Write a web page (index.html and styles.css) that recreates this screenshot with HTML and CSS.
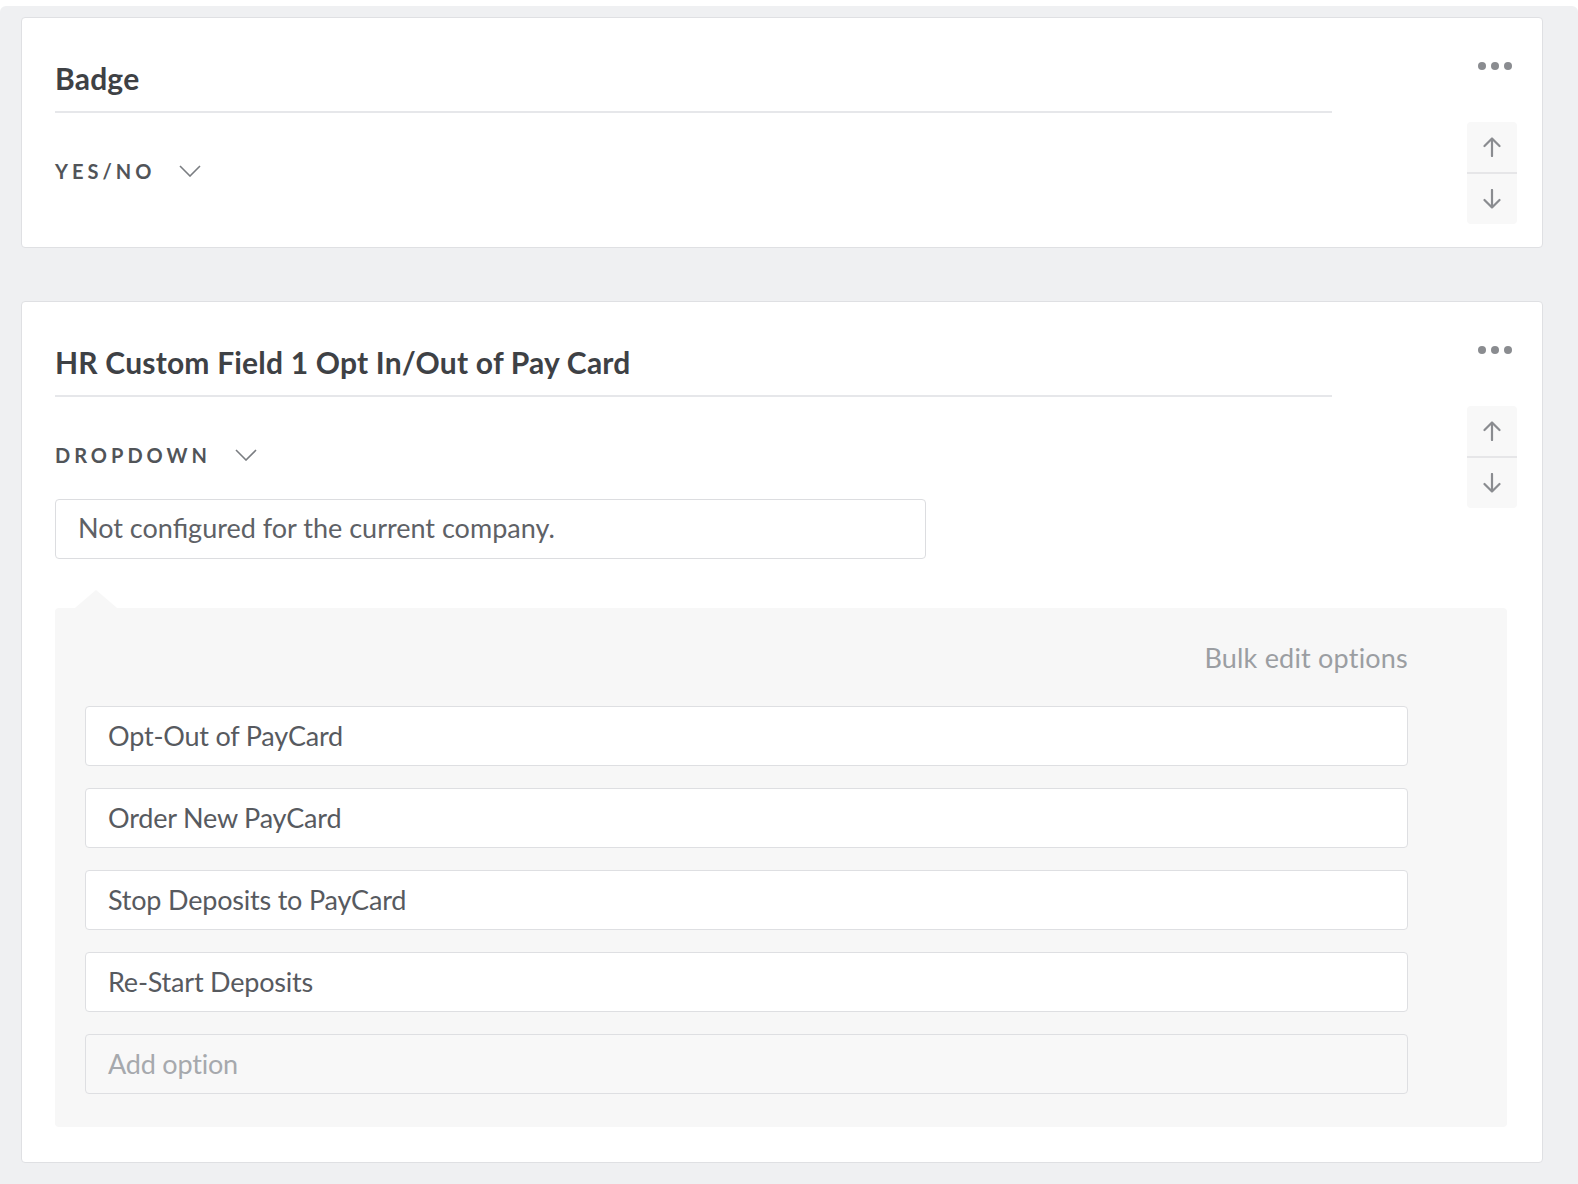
FILE: index.html
```html
<!DOCTYPE html>
<html lang="en">
<head>
<meta charset="utf-8">
<title>Custom fields</title>
<link rel="stylesheet" href="styles.css">
</head>
<body>
<div class="canvas">
  <section class="card">
    <div class="card-head">
      <div class="head-main">
        <h2 class="field-title">Badge</h2>
        <div class="type-select">
          <span class="type-label">YES/NO</span>
          <svg class="chev" width="22" height="12" viewBox="0 0 22 12"><path d="M1 1 L11 11 L21 1" fill="none" stroke="#7a7d81" stroke-width="1.6"/></svg>
        </div>
      </div>
      <div class="side">
        <div class="more"><span class="dot"></span><span class="dot"></span><span class="dot"></span></div>
        <div class="move">
          <button class="move-btn" type="button" aria-label="Move up"><svg width="20" height="20" viewBox="0 0 20 20"><path d="M10 19 V1.5 M2.5 9 L10 1.5 L17.5 9" fill="none" stroke="#8a8c90" stroke-width="2.2" stroke-linecap="round" stroke-linejoin="round"/></svg></button>
          <span class="move-sep"></span>
          <button class="move-btn" type="button" aria-label="Move down"><svg width="20" height="20" viewBox="0 0 20 20"><path d="M10 1 V18.5 M2.5 11 L10 18.5 L17.5 11" fill="none" stroke="#8a8c90" stroke-width="2.2" stroke-linecap="round" stroke-linejoin="round"/></svg></button>
        </div>
      </div>
    </div>
  </section>

  <section class="card">
    <div class="card-head">
      <div class="head-main">
        <h2 class="field-title">HR Custom Field 1 Opt In/Out of Pay Card</h2>
        <div class="type-select">
          <span class="type-label">DROPDOWN</span>
          <svg class="chev" width="22" height="12" viewBox="0 0 22 12"><path d="M1 1 L11 11 L21 1" fill="none" stroke="#7a7d81" stroke-width="1.6"/></svg>
        </div>
        <div class="notice">Not configured for the current company.</div>
      </div>
      <div class="side">
        <div class="more"><span class="dot"></span><span class="dot"></span><span class="dot"></span></div>
        <div class="move">
          <button class="move-btn" type="button" aria-label="Move up"><svg width="20" height="20" viewBox="0 0 20 20"><path d="M10 19 V1.5 M2.5 9 L10 1.5 L17.5 9" fill="none" stroke="#8a8c90" stroke-width="2.2" stroke-linecap="round" stroke-linejoin="round"/></svg></button>
          <span class="move-sep"></span>
          <button class="move-btn" type="button" aria-label="Move down"><svg width="20" height="20" viewBox="0 0 20 20"><path d="M10 1 V18.5 M2.5 11 L10 18.5 L17.5 11" fill="none" stroke="#8a8c90" stroke-width="2.2" stroke-linecap="round" stroke-linejoin="round"/></svg></button>
        </div>
      </div>
    </div>
    <div class="options-panel">
      <div class="bulk">Bulk edit options</div>
      <div class="option-list">
        <div class="option">Opt-Out of PayCard</div>
        <div class="option">Order New PayCard</div>
        <div class="option">Stop Deposits to PayCard</div>
        <div class="option">Re-Start Deposits</div>
        <div class="option option-add">Add option</div>
      </div>
    </div>
  </section>
</div>
</body>
</html>
```

FILE: styles.css
```css
* { box-sizing: border-box; }

html, body {
  margin: 0;
  padding: 0;
  background: #ffffff;
}

body {
  font-family: "Lato", "Liberation Sans", sans-serif;
  color: #55585c;
}

.canvas {
  margin-top: 6px;
  min-height: 1178px;
  background: #eff0f2;
  border-radius: 6px 6px 0 0;
  padding: 11px 35px 22px 21px;
  display: flex;
  flex-direction: column;
  gap: 53px;
}

.card {
  background: #ffffff;
  border: 1px solid #dfe0e3;
  border-radius: 4px;
  padding: 42px 25px 23px 33px;
}

.card:last-child {
  padding-bottom: 35px;
}

.card-head {
  display: flex;
  align-items: flex-start;
}

.head-main {
  flex: 1;
  margin-right: 135px;
}

.field-title {
  margin: 0;
  font-size: 30px;
  line-height: 36px;
  font-weight: 700;
  letter-spacing: 0.2px;
  color: #3e4145;
  padding-bottom: 15px;
  border-bottom: 2px solid #e6e7ea;
}

.type-select {
  margin-top: 46px;
  height: 24px;
  display: flex;
  align-items: center;
  gap: 24px;
}

.type-label {
  font-size: 20px;
  line-height: 24px;
  font-weight: 700;
  letter-spacing: 4px;
  color: #515458;
}

.chev {
  display: block;
}

.notice {
  margin-top: 32px;
  width: 871px;
  height: 60px;
  border: 1px solid #dcdde0;
  border-radius: 4px;
  padding: 0 22px 2px;
  display: flex;
  align-items: center;
  font-size: 27px;
  line-height: 34px;
  color: #5e6166;
}

.side {
  width: 50px;
  flex: none;
}

.more {
  margin: 2px 0 0 11px;
  display: flex;
  gap: 5px;
  height: 8px;
}

.dot {
  width: 8px;
  height: 8px;
  border-radius: 50%;
  background: #8a8c90;
}

.move {
  margin-top: 52px;
  width: 50px;
  background: #f8f8f8;
  border-radius: 4px;
  display: flex;
  flex-direction: column;
}

.move-btn {
  width: 50px;
  height: 50px;
  border: 0;
  padding: 0;
  margin: 0;
  background: transparent;
  display: flex;
  align-items: center;
  justify-content: center;
  cursor: pointer;
}

.move-btn svg {
  display: block;
}

.move-sep {
  display: block;
  height: 2px;
  background: #e6e6e8;
}

.options-panel {
  position: relative;
  margin: 49px 10px 0 0;
  background: #f7f7f7;
  border-radius: 4px;
  padding: 33px 99px 33px 30px;
}

.options-panel::before {
  content: "";
  position: absolute;
  top: -18px;
  left: 20px;
  border-left: 21px solid transparent;
  border-right: 21px solid transparent;
  border-bottom: 18px solid #f7f7f7;
}

.bulk {
  text-align: right;
  font-size: 27px;
  line-height: 34px;
  letter-spacing: 0.2px;
  color: #9b9ea2;
}

.option-list {
  margin-top: 31px;
  display: flex;
  flex-direction: column;
  gap: 22px;
}

.option {
  height: 60px;
  background: #ffffff;
  border: 1px solid #dedfe2;
  border-radius: 4px;
  padding: 0 22px;
  display: flex;
  align-items: center;
  font-size: 27px;
  line-height: 34px;
  letter-spacing: -0.2px;
  color: #575a5f;
}

.option-add {
  background: #f8f8f8;
  color: #a6a9ad;
}
```
